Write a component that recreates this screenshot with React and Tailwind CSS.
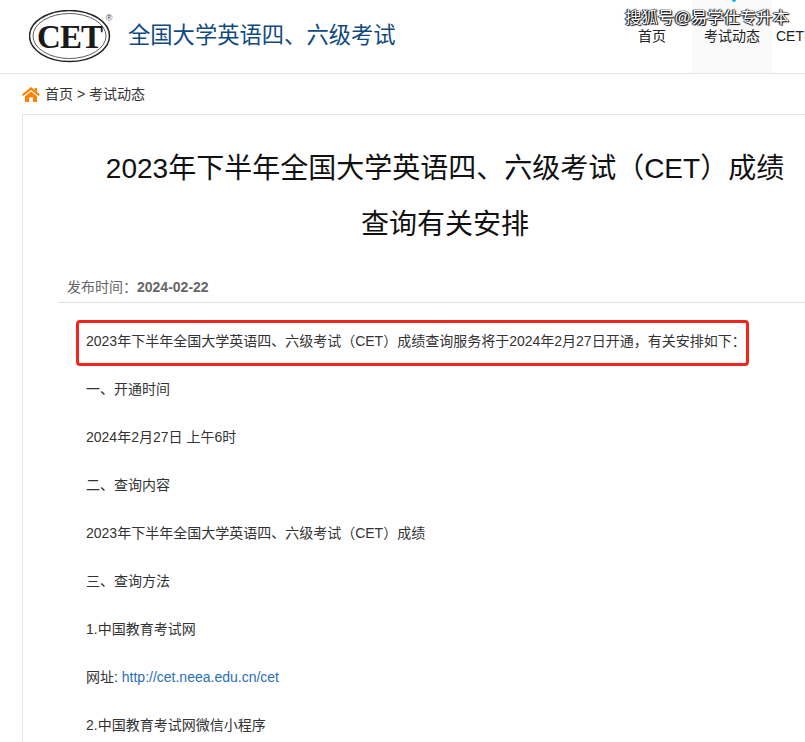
import React from 'react';

const FONT = "font-['Liberation_Sans','Noto_Sans_CJK_SC',sans-serif]";

function Logo() {
  return (
    <svg width="86" height="54" viewBox="0 0 86 54" className="shrink-0">
      <ellipse cx="40.5" cy="26" rx="40" ry="25.5" fill="none" stroke="#222" strokeWidth="1.5" />
      <ellipse cx="40.5" cy="26" rx="36.5" ry="22.5" fill="none" stroke="#333" strokeWidth="0.8" />
      <text x="40.5" y="37.5" textAnchor="middle" fontFamily="'Liberation Serif', serif" fontWeight="700" fontSize="33" letterSpacing="-1" fill="#1a1a1a">CET</text>
      <text x="80" y="11" textAnchor="middle" fontFamily="'Liberation Sans', sans-serif" fontSize="9" fill="#444">®</text>
    </svg>
  );
}

function HomeIcon() {
  return (
    <svg width="18" height="15" viewBox="0 0 18 15" className="shrink-0">
      <path d="M12.6 1 H15 V5 L12.6 3.4 Z" fill="#ff8205" />
      <path d="M0 7.4 L9 0 L18 7.4 L16.6 9 L9 3 L1.4 9 Z" fill="#ff8205" />
      <path d="M3 9.2 L9 4.4 L15 9.2 V15 H11 V10.6 H7 V15 H3 Z" fill="#ff8205" />
    </svg>
  );
}

const paragraphs = [
  '一、开通时间',
  '2024年2月27日 上午6时',
  '二、查询内容',
  '2023年下半年全国大学英语四、六级考试（CET）成绩',
  '三、查询方法',
  '1.中国教育考试网',
];

export default function App() {
  return (
    <div className={`relative h-[742px] w-[805px] overflow-hidden bg-white ${FONT}`}>
      <div className="w-[1000px]">
        <header className="flex h-[74px] items-start border-b border-[#e5e5e5]">
          <div className="ml-[29px] mt-[10px]"><Logo /></div>
          <h1 className="ml-[13px] mt-[18px] w-[484px] text-[22.3px] leading-[36px] text-[#0f4a80]">全国大学英语四、六级考试</h1>
          <nav className="flex h-[73px] text-[14px] leading-[73px] text-[#222]">
            <span className="w-[80px] text-center">首页</span>
            <span className="w-[80px] bg-[#f9f9f9] text-center">考试动态</span>
            <span className="ml-[4px] whitespace-nowrap">CET考试</span>
          </nav>
        </header>

        <div className="ml-[22px] flex h-[40px] items-center gap-[5px] text-[14px] text-[#333]">
          <HomeIcon />
          <span>首页 &gt; 考试动态</span>
        </div>

        <main className="ml-[22px] w-[846px] border border-[#e5e5e5] pt-[26px]">
          <h2 className="mx-auto w-[700px] text-center text-[28px] leading-[56px] text-[#111]">
            2023年下半年全国大学英语四、六级考试（CET）成绩查询有关安排
          </h2>
          <div className="ml-[35px] mt-[20px] flex h-[30px] items-center border-b border-[#e0e0e0] pl-[9px] text-[14px] text-[#666]">
            发布时间：<b className="font-bold">2024-02-22</b>
          </div>
          <article className="ml-[63px] mt-[14px] text-[14px] leading-[48px] text-[#333]">
            <p>2023年下半年全国大学英语四、六级考试（CET）成绩查询服务将于2024年2月27日开通，有关安排如下：</p>
            {paragraphs.map((text) => <p key={text}>{text}</p>)}
            <p>网址: <a className="text-[#2a6fb5]">http://cet.neea.edu.cn/cet</a></p>
            <p>2.中国教育考试网微信小程序</p>
          </article>
        </main>
      </div>

      {/* 红框标注 */}
      <div className="absolute left-[76px] top-[320px] h-[46px] w-[673px] rounded-[4px] border-[3px] border-[#f5231c]" />
      {/* 水印 */}
      <div className="absolute left-[625px] top-[6px] text-[16.4px] leading-[22px] text-white [text-shadow:0_0_1px_#000,0_0_1px_#000,1px_1px_1px_#000,-1px_0_1px_#000]">搜狐号@易学仕专升本</div>
      <div className="absolute left-[732px] top-0 h-[2px] w-[4px] rounded-b-full bg-sky-400" />
    </div>
  );
}
